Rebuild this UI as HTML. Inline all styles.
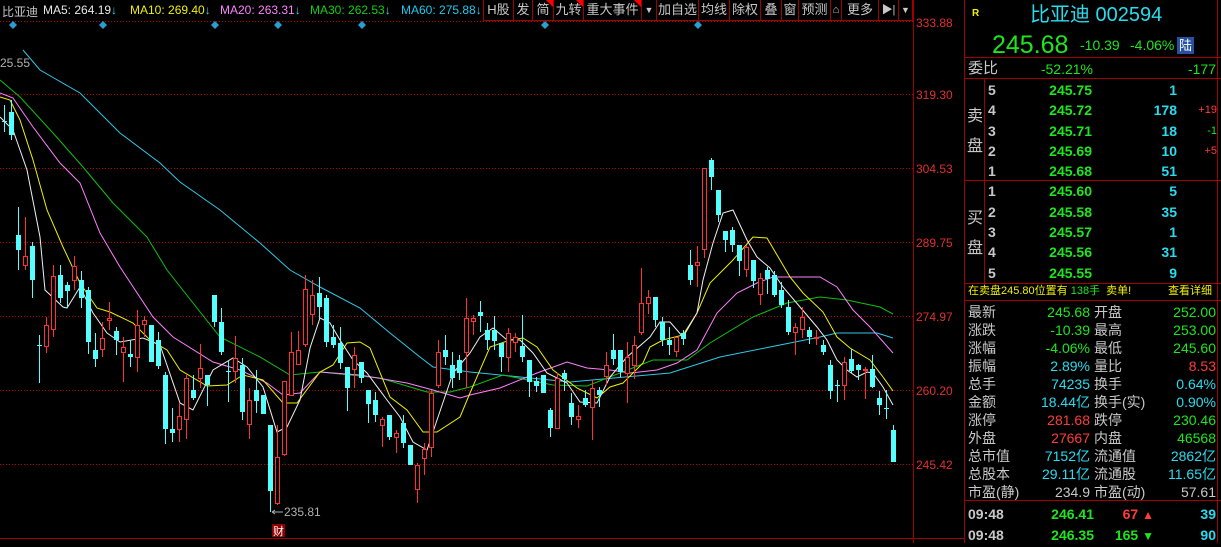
<!DOCTYPE html>
<html><head><meta charset="utf-8">
<style>
*{margin:0;padding:0;box-sizing:border-box}
body{width:1221px;height:543px;background:#000;overflow:hidden;position:relative;font-family:"Liberation Sans","Noto Sans CJK SC",sans-serif;color:#c8c8c8}
.a{position:absolute;white-space:nowrap}
.hd{font-size:12px;top:3px}
.tb{position:absolute;top:0;height:21px;border:1px solid #a00000;border-top:none;color:#c8c8c8;font-size:13px;line-height:20px;text-align:center;background:#000}
.tri{position:absolute;top:0;right:0;width:0;height:0;border-left:7px solid transparent;border-top:7px solid #f00}
.r{font-size:14px;line-height:16px}
.g{color:#1ee61e}.c{color:#28dcf0}.rd{color:#ff3c3c}.w{color:#c8c8c8}.y{color:#f0f000}
.rt{text-align:right}
.hl{position:absolute;height:1px;background:#a00000;left:965px;width:256px}
</style></head><body>

<!-- header MA -->
<div class="a hd w" style="left:2px">比亚迪</div>
<div class="a hd" style="left:43px;color:#e8e8e8">MA5: 264.19<span class="c">↓</span></div>
<div class="a hd y" style="left:130px">MA10: 269.40<span class="c">↓</span></div>
<div class="a hd" style="left:220px;color:#ff80ff">MA20: 263.31<span class="c">↓</span></div>
<div class="a hd" style="left:310px;color:#10d010">MA30: 262.53<span class="c">↓</span></div>
<div class="a hd" style="left:401px;color:#20c8f0">MA60: 275.88<span class="c">↓</span></div>

<div class="tb" style="left:483px;width:31px">H股</div>
<div class="tb" style="left:513px;width:20px">发</div>
<div class="tb" style="left:532px;width:22px">简<div class="tri"></div></div>
<div class="tb" style="left:553px;width:31px">九转<div class="tri"></div></div>
<div class="tb" style="left:583px;width:59px">重大事件<div class="tri"></div></div>
<div class="tb" style="left:641px;width:16px;font-size:9px">▼</div>
<div class="tb" style="left:656px;width:43px">加自选</div>
<div class="tb" style="left:698px;width:32px">均线</div>
<div class="tb" style="left:729px;width:32px">除权</div>
<div class="tb" style="left:760px;width:22px">叠</div>
<div class="tb" style="left:781px;width:18px">窗</div>
<div class="tb" style="left:798px;width:33px">预测</div>
<div class="tb" style="left:830px;width:12px;font-size:11px">⌂</div>
<div class="tb" style="left:841px;width:38px">更多</div>
<div class="tb" style="left:878px;width:21px;font-size:11px">▶|</div>
<div class="tb" style="left:898px;width:15px;font-size:9px">▼</div>

<svg class="a" style="left:0;top:0" width="965" height="543">
<g stroke="#c00000" stroke-dasharray="1 2" stroke-width="1">
<line x1="0" y1="21.5" x2="913" y2="21.5"/>
<line x1="0" y1="94.5" x2="913" y2="94.5"/>
<line x1="0" y1="168.5" x2="913" y2="168.5"/>
<line x1="0" y1="242.5" x2="913" y2="242.5"/>
<line x1="0" y1="316.5" x2="913" y2="316.5"/>
<line x1="0" y1="390.5" x2="913" y2="390.5"/>
<line x1="0" y1="464.5" x2="913" y2="464.5"/>
</g>
<line x1="913.5" y1="0" x2="913.5" y2="543" stroke="#a00000"/>
<line x1="964.5" y1="0" x2="964.5" y2="543" stroke="#a00000"/>
<line x1="0" y1="538.5" x2="965" y2="538.5" stroke="#a00000"/>
<g fill="#2a9ed0">
<path d="M13 21l4 4-4 4-4-4z"/><path d="M103 21l4 4-4 4-4-4z"/><path d="M215 21l4 4-4 4-4-4z"/><path d="M278 21l4 4-4 4-4-4z"/><path d="M362 21l4 4-4 4-4-4z"/><path d="M545 21l4 4-4 4-4-4z"/><path d="M698 21l4 4-4 4-4-4z"/>
</g>
<g font-family="Liberation Sans" font-size="12" fill="#e03030">
<text x="916" y="27">333.88</text><text x="916" y="99">319.30</text><text x="916" y="173">304.53</text><text x="916" y="247">289.75</text><text x="916" y="321">274.97</text><text x="916" y="395">260.20</text><text x="916" y="469">245.42</text>
</g>
<text x="0" y="67" font-family="Liberation Sans" font-size="12" fill="#b0b0b0">25.55</text>
<path d="M272 512h11M272 512l3-2M272 512l3 2" stroke="#b0b0b0" fill="none"/>
<text x="284" y="516" font-family="Liberation Sans" font-size="12" fill="#b0b0b0">235.81</text>
<rect x="272" y="524" width="13" height="13" fill="#900000"/>
<text x="273" y="535" font-family="Noto Sans CJK SC" font-size="11" fill="#fff">财</text>

<!-- MA lines -->
<g fill="none" stroke-width="1">
<polyline stroke="#30c8e8" points="23,50 40,70 80,93 120,133 160,163 180,182 220,210 260,243 290,270 320,287 360,308 390,333 420,357 433,367 470,372 570,382 670,373 720,357 770,347 820,337 837,333 877,333 893,338"/>
<polyline stroke="#10c010" points="0,80 20,97 53,133 83,167 113,203 147,237 167,270 193,303 220,337 260,357 290,375 320,372 380,378 427,392 450,392 470,387 503,375 553,385 587,386 620,373 653,360 687,360 710,343 753,317 787,303 820,297 847,300 880,307 893,314"/>
<polyline stroke="#ff80ff" points="0,93 13,98 33,127 60,163 80,183 100,233 120,267 153,317 173,337 213,362 240,370 267,383 283,395 300,393 320,372 360,375 407,383 433,390 460,398 470,395 500,388 537,373 567,362 587,368 610,370 630,373 657,370 677,363 697,350 717,313 737,293 757,283 773,277 820,277 837,287 853,310 870,327 893,353"/>
<polyline stroke="#f0f000" points="0,97 10,100 20,120 33,160 47,210 63,247 80,283 97,308 110,312 133,323 150,340 167,350 180,370 207,386 227,385 243,375 263,380 283,403 297,403 320,372 333,365 347,343 360,342 370,348 390,397 407,410 423,432 437,432 460,417 470,393 490,347 510,340 523,338 537,347 553,370 577,388 597,398 610,387 623,383 643,363 650,347 663,340 683,335 697,313 710,283 733,260 753,237 767,238 790,277 803,293 823,312 837,337 850,348 870,360 883,377 893,391"/>
<polyline stroke="#f0f0f0" points="0,117 13,130 27,170 40,237 45,290 63,307 67,308 80,287 93,313 107,333 120,342 143,338 160,345 180,403 193,410 213,370 233,358 247,367 263,387 277,432 287,427 300,400 310,348 320,318 330,323 340,340 353,360 367,373 387,400 400,417 413,442 427,450 437,420 453,373 470,353 480,337 493,328 507,340 520,340 533,353 547,373 567,383 580,402 597,403 610,377 627,357 650,337 660,322 670,322 683,337 697,313 703,280 713,243 723,213 733,210 747,240 757,257 770,268 783,287 800,307 817,327 827,340 837,360 847,370 857,377 867,372 873,373 883,387 893,405"/>
</g>

<!-- cyan candles -->
<g stroke="#54ffff" fill="#54ffff">
<path d="M4 105V132M11 100V140M18 207V270M32 242V298M39 335V383M60 265V303M67 282V308M81 271V308M88 287V354M95 333V367M116 327V355M130 340V367M151 325V362M158 332V369M165 372V444M172 408V442M193 375V400M207 375V406M214 295V327M221 308V355M228 360V402M242 358V420M256 370V413M263 395V414M270 425V512M319 277V319M326 295V347M333 325V348M340 327V369M347 367V411M361 362V383M368 390V423M375 392V422M389 415V440M403 415V448M410 445V465M445 335V365M452 352V388M459 355V380M480 301V332M487 323V350M494 316V350M501 343V372M522 315V362M529 360V397M536 377V392M543 375V393M550 408V437M564 370V391M571 393V425M585 390V407M599 387V407M613 334V365M620 350V377M655 297V327M662 317V346M669 327V355M683 330V345M690 250V285M711 158V190M718 190V222M725 231V252M732 227V252M739 245V276M753 260V288M767 267V294M774 271V297M781 282V308M788 300V335M809 327V344M823 340V355M830 360V399M837 380V402M851 349V373M858 364V380M872 355V388M879 391V415M886 390V419M893 425V462" transform="translate(.5,0)"/>
<g stroke="none">
<rect x="2" y="121" width="5" height="1"/><rect x="9" y="112" width="5" height="23"/><rect x="16" y="235" width="5" height="15"/><rect x="30" y="246" width="5" height="34"/><rect x="37" y="345" width="5" height="1"/><rect x="58" y="275" width="5" height="23"/><rect x="65" y="285" width="5" height="6"/><rect x="79" y="280" width="5" height="18"/><rect x="86" y="290" width="5" height="52"/><rect x="93" y="350" width="5" height="9"/><rect x="114" y="331" width="5" height="9"/><rect x="128" y="354" width="5" height="3"/><rect x="149" y="325" width="5" height="37"/><rect x="156" y="340" width="5" height="26"/><rect x="163" y="375" width="5" height="54"/><rect x="170" y="429" width="5" height="4"/><rect x="191" y="390" width="5" height="8"/><rect x="205" y="375" width="5" height="10"/><rect x="212" y="295" width="5" height="27"/><rect x="219" y="322" width="5" height="30"/><rect x="226" y="371" width="5" height="1"/><rect x="240" y="365" width="5" height="47"/><rect x="254" y="390" width="5" height="11"/><rect x="261" y="395" width="5" height="19"/><rect x="268" y="425" width="5" height="66"/><rect x="317" y="293" width="5" height="14"/><rect x="324" y="298" width="5" height="44"/><rect x="331" y="337" width="5" height="8"/><rect x="338" y="343" width="5" height="20"/><rect x="345" y="367" width="5" height="21"/><rect x="359" y="362" width="5" height="16"/><rect x="366" y="390" width="5" height="14"/><rect x="373" y="400" width="5" height="15"/><rect x="387" y="415" width="5" height="22"/><rect x="401" y="423" width="5" height="20"/><rect x="408" y="445" width="5" height="20"/><rect x="443" y="350" width="5" height="7"/><rect x="450" y="365" width="5" height="13"/><rect x="457" y="360" width="5" height="13"/><rect x="478" y="312" width="5" height="4"/><rect x="485" y="330" width="5" height="10"/><rect x="492" y="330" width="5" height="11"/><rect x="499" y="343" width="5" height="14"/><rect x="520" y="346" width="5" height="11"/><rect x="527" y="360" width="5" height="22"/><rect x="534" y="381" width="5" height="5"/><rect x="541" y="375" width="5" height="18"/><rect x="548" y="410" width="5" height="18"/><rect x="562" y="373" width="5" height="6"/><rect x="569" y="403" width="5" height="14"/><rect x="583" y="398" width="5" height="7"/><rect x="597" y="390" width="5" height="5"/><rect x="611" y="350" width="5" height="9"/><rect x="618" y="350" width="5" height="22"/><rect x="653" y="297" width="5" height="23"/><rect x="660" y="322" width="5" height="18"/><rect x="667" y="340" width="5" height="5"/><rect x="681" y="333" width="5" height="6"/><rect x="688" y="265" width="5" height="15"/><rect x="709" y="160" width="5" height="17"/><rect x="716" y="190" width="5" height="25"/><rect x="723" y="231" width="5" height="9"/><rect x="730" y="230" width="5" height="15"/><rect x="737" y="245" width="5" height="16"/><rect x="751" y="260" width="5" height="21"/><rect x="765" y="270" width="5" height="9"/><rect x="772" y="275" width="5" height="20"/><rect x="779" y="290" width="5" height="15"/><rect x="786" y="307" width="5" height="25"/><rect x="807" y="330" width="5" height="7"/><rect x="821" y="345" width="5" height="7"/><rect x="828" y="365" width="5" height="26"/><rect x="835" y="385" width="5" height="1"/><rect x="849" y="359" width="5" height="12"/><rect x="856" y="365" width="5" height="5"/><rect x="870" y="369" width="5" height="18"/><rect x="877" y="398" width="5" height="7"/><rect x="884" y="408" width="5" height="1"/><rect x="891" y="430" width="5" height="32"/>
</g></g>

<!-- red candles -->
<g stroke="#ff3232" fill="#000">
<path d="M25 217V270M46 317V353M53 265V337M74 256V290M102 322V357M109 302V330M123 337V382M137 310V372M144 316V337M179 403V442M186 375V439M200 344V388M235 336V383M249 388V439M277 425V505M284 381V456M291 332V395M298 331V364M305 275V347M312 280V325M354 347V388M382 417V447M396 430V453M417 463V503M424 443V475M431 390V457M438 340V388M466 298V388M473 315V335M508 328V372M515 333V352M557 373V428M578 405V428M592 380V440M606 352V385M627 342V403M634 336V379M641 268V335M648 290V314M676 337V357M697 246V287M704 168V258M746 245V277M760 273V305M795 323V355M802 307V338M816 330V345M844 357V400M865 367V399" transform="translate(.5,0)"/>
<g>
<rect x="23.5" y="256.5" width="4" height="9"/><rect x="44.5" y="325.5" width="4" height="21"/><rect x="51.5" y="276.5" width="4" height="53"/><rect x="72.5" y="266.5" width="4" height="14"/><rect x="100.5" y="338.5" width="4" height="11"/><rect x="107.5" y="318.5" width="4" height="2"/><rect x="121.5" y="347.5" width="4" height="5"/><rect x="135.5" y="325.5" width="4" height="32"/><rect x="142.5" y="320.5" width="4" height="4"/><rect x="177.5" y="416.5" width="4" height="13"/><rect x="184.5" y="378.5" width="4" height="41"/><rect x="198.5" y="368.5" width="4" height="10"/><rect x="233.5" y="358.5" width="4" height="13"/><rect x="247.5" y="400.5" width="4" height="24"/><rect x="275.5" y="457.5" width="4" height="46"/><rect x="282.5" y="381.5" width="4" height="73"/><rect x="289.5" y="352.5" width="4" height="43"/><rect x="296.5" y="350.5" width="4" height="14"/><rect x="303.5" y="289.5" width="4" height="55"/><rect x="310.5" y="295.5" width="4" height="19"/><rect x="352.5" y="355.5" width="4" height="14"/><rect x="380.5" y="419.5" width="4" height="6"/><rect x="394.5" y="433.5" width="4" height="4"/><rect x="415.5" y="465.5" width="4" height="24"/><rect x="422.5" y="449.5" width="4" height="9"/><rect x="429.5" y="393.5" width="4" height="54"/><rect x="436.5" y="352.5" width="4" height="33"/><rect x="464.5" y="318.5" width="4" height="34"/><rect x="471.5" y="318.5" width="4" height="3"/><rect x="506.5" y="333.5" width="4" height="24"/><rect x="513.5" y="337.5" width="4" height="5"/><rect x="555.5" y="378.5" width="4" height="50"/><rect x="576.5" y="416.5" width="4" height="3"/><rect x="590.5" y="388.5" width="4" height="19"/><rect x="604.5" y="365.5" width="4" height="11"/><rect x="625.5" y="357.5" width="4" height="16"/><rect x="632.5" y="345.5" width="4" height="20"/><rect x="639.5" y="303.5" width="4" height="29"/><rect x="646.5" y="297.5" width="4" height="6"/><rect x="674.5" y="337.5" width="4" height="14"/><rect x="695.5" y="262.5" width="4" height="3"/><rect x="702.5" y="168.5" width="4" height="81"/><rect x="744.5" y="247.5" width="4" height="22"/><rect x="758.5" y="278.5" width="4" height="16"/><rect x="793.5" y="327.5" width="4" height="5"/><rect x="800.5" y="317.5" width="4" height="12"/><rect x="814.5" y="337.5" width="4" height="1"/><rect x="842.5" y="362.5" width="4" height="23"/><rect x="863.5" y="369.5" width="4" height="1"/>
</g></g>
</svg>

<!-- right panel -->
<div class="a" style="left:1217px;top:0;width:1px;height:543px;background:#a00000"></div>
<div class="a y" style="left:972px;top:8px;font-size:10px;font-weight:bold">R</div>
<div class="a c" style="left:1030px;top:3px;font-size:20px;line-height:24px">比亚迪 002594</div>
<div class="a g" style="left:992px;top:31px;font-size:25px;line-height:28px">245.68</div>
<div class="a g" style="left:1080px;top:37px;font-size:14px">-10.39</div>
<div class="a g" style="left:1130px;top:37px;font-size:14px">-4.06%</div>
<div class="a" style="left:1177px;top:37px;width:17px;height:17px;background:#2850a0;color:#fff;font-size:13px;text-align:center;line-height:17px">陆</div>
<div class="hl" style="top:57px"></div>
<div class="a r w" style="left:968px;top:61px;font-size:15px">委比</div>
<div class="a r g rt" style="left:1020px;top:61px;width:73px">-52.21%</div>
<div class="a r g rt" style="left:1150px;top:61px;width:66px">-177</div>
<div class="hl" style="top:78px"></div>
<div class="a" style="left:984px;top:78px;width:1px;height:205px;background:#a00000"></div>
<div class="a w" style="left:967px;top:102px;font-size:16px;line-height:30px;width:16px">卖<br>盘</div>
<div class="a w" style="left:967px;top:204px;font-size:16px;line-height:30px;width:16px">买<br>盘</div>
<div class="hl" style="top:180px;left:965px"></div>
<div class="hl" style="top:283px"></div>

<div class="a r" style="left:988px;top:80px;width:230px;font-weight:bold;line-height:20.3px">
<div style="position:relative;height:20.3px"><span class="w">5</span><span class="a g rt" style="left:0;width:104px">245.75</span><span class="a c rt" style="left:0;width:189px">1</span></div>
<div style="position:relative;height:20.3px"><span class="w">4</span><span class="a g rt" style="left:0;width:104px">245.72</span><span class="a c rt" style="left:0;width:189px">178</span><span class="a rd rt" style="left:0;width:229px;font-size:11px;font-weight:normal">+19</span></div>
<div style="position:relative;height:20.3px"><span class="w">3</span><span class="a g rt" style="left:0;width:104px">245.71</span><span class="a c rt" style="left:0;width:189px">18</span><span class="a g rt" style="left:0;width:229px;font-size:11px;font-weight:normal">-1</span></div>
<div style="position:relative;height:20.3px"><span class="w">2</span><span class="a g rt" style="left:0;width:104px">245.69</span><span class="a c rt" style="left:0;width:189px">10</span><span class="a rd rt" style="left:0;width:229px;font-size:11px;font-weight:normal">+5</span></div>
<div style="position:relative;height:20.3px"><span class="w">1</span><span class="a g rt" style="left:0;width:104px">245.68</span><span class="a c rt" style="left:0;width:189px">51</span></div>
<div style="position:relative;height:20.3px"><span class="w">1</span><span class="a g rt" style="left:0;width:104px">245.60</span><span class="a c rt" style="left:0;width:189px">5</span></div>
<div style="position:relative;height:20.3px"><span class="w">2</span><span class="a g rt" style="left:0;width:104px">245.58</span><span class="a c rt" style="left:0;width:189px">35</span></div>
<div style="position:relative;height:20.3px"><span class="w">3</span><span class="a g rt" style="left:0;width:104px">245.57</span><span class="a c rt" style="left:0;width:189px">1</span></div>
<div style="position:relative;height:20.3px"><span class="w">4</span><span class="a g rt" style="left:0;width:104px">245.56</span><span class="a c rt" style="left:0;width:189px">31</span></div>
<div style="position:relative;height:20.3px"><span class="w">5</span><span class="a g rt" style="left:0;width:104px">245.55</span><span class="a c rt" style="left:0;width:189px">9</span></div>
</div>

<div class="a y" style="left:968px;top:285px;font-size:11px;line-height:13px">在卖盘245.80位置有 <span class="g">138手</span> &nbsp;卖单!</div>
<div class="a y" style="left:1168px;top:285px;font-size:11px;line-height:13px">查看详细</div>
<div class="hl" style="top:300px"></div>

<div class="a r" style="left:968px;top:303px;width:250px;line-height:18px">
<div style="position:relative;height:18px"><span class="w">最新</span><span class="a g rt" style="left:0;width:122px">245.68</span><span class="a w" style="left:126px">开盘</span><span class="a g rt" style="left:0;width:248px">252.00</span></div>
<div style="position:relative;height:18px"><span class="w">涨跌</span><span class="a g rt" style="left:0;width:122px">-10.39</span><span class="a w" style="left:126px">最高</span><span class="a g rt" style="left:0;width:248px">253.00</span></div>
<div style="position:relative;height:18px"><span class="w">涨幅</span><span class="a g rt" style="left:0;width:122px">-4.06%</span><span class="a w" style="left:126px">最低</span><span class="a g rt" style="left:0;width:248px">245.60</span></div>
<div style="position:relative;height:18px"><span class="w">振幅</span><span class="a c rt" style="left:0;width:122px">2.89%</span><span class="a w" style="left:126px">量比</span><span class="a rd rt" style="left:0;width:248px">8.53</span></div>
<div style="position:relative;height:18px"><span class="w">总手</span><span class="a c rt" style="left:0;width:122px">74235</span><span class="a w" style="left:126px">换手</span><span class="a c rt" style="left:0;width:248px">0.64%</span></div>
<div style="position:relative;height:18px"><span class="w">金额</span><span class="a c rt" style="left:0;width:122px">18.44亿</span><span class="a w" style="left:126px">换手(实)</span><span class="a c rt" style="left:0;width:248px">0.90%</span></div>
<div style="position:relative;height:18px"><span class="w">涨停</span><span class="a rd rt" style="left:0;width:122px">281.68</span><span class="a w" style="left:126px">跌停</span><span class="a g rt" style="left:0;width:248px">230.46</span></div>
<div style="position:relative;height:18px"><span class="w">外盘</span><span class="a rd rt" style="left:0;width:122px">27667</span><span class="a w" style="left:126px">内盘</span><span class="a g rt" style="left:0;width:248px">46568</span></div>
<div style="position:relative;height:18px"><span class="w">总市值</span><span class="a c rt" style="left:0;width:122px">7152亿</span><span class="a w" style="left:126px">流通值</span><span class="a c rt" style="left:0;width:248px">2862亿</span></div>
<div style="position:relative;height:18px"><span class="w">总股本</span><span class="a c rt" style="left:0;width:122px">29.11亿</span><span class="a w" style="left:126px">流通股</span><span class="a c rt" style="left:0;width:248px">11.65亿</span></div>
<div style="position:relative;height:18px"><span class="w">市盈(静)</span><span class="a w rt" style="left:0;width:122px">234.9</span><span class="a w" style="left:126px">市盈(动)</span><span class="a w rt" style="left:0;width:248px">57.61</span></div>
</div>
<div class="hl" style="top:500px"></div>
<div class="a r" style="left:968px;top:504px;width:250px;font-weight:bold;line-height:21px">
<div style="position:relative;height:21px"><span class="w">09:48</span><span class="a g rt" style="left:0;width:126px">246.41</span><span class="a rd rt" style="left:0;width:186px">67 <span style="font-size:12px">▲</span></span><span class="a c rt" style="left:0;width:248px">39</span></div>
<div style="position:relative;height:21px"><span class="w">09:48</span><span class="a g rt" style="left:0;width:126px">246.35</span><span class="a g rt" style="left:0;width:186px">165 <span style="font-size:12px">▼</span></span><span class="a c rt" style="left:0;width:248px">90</span></div>
</div>
</body></html>
